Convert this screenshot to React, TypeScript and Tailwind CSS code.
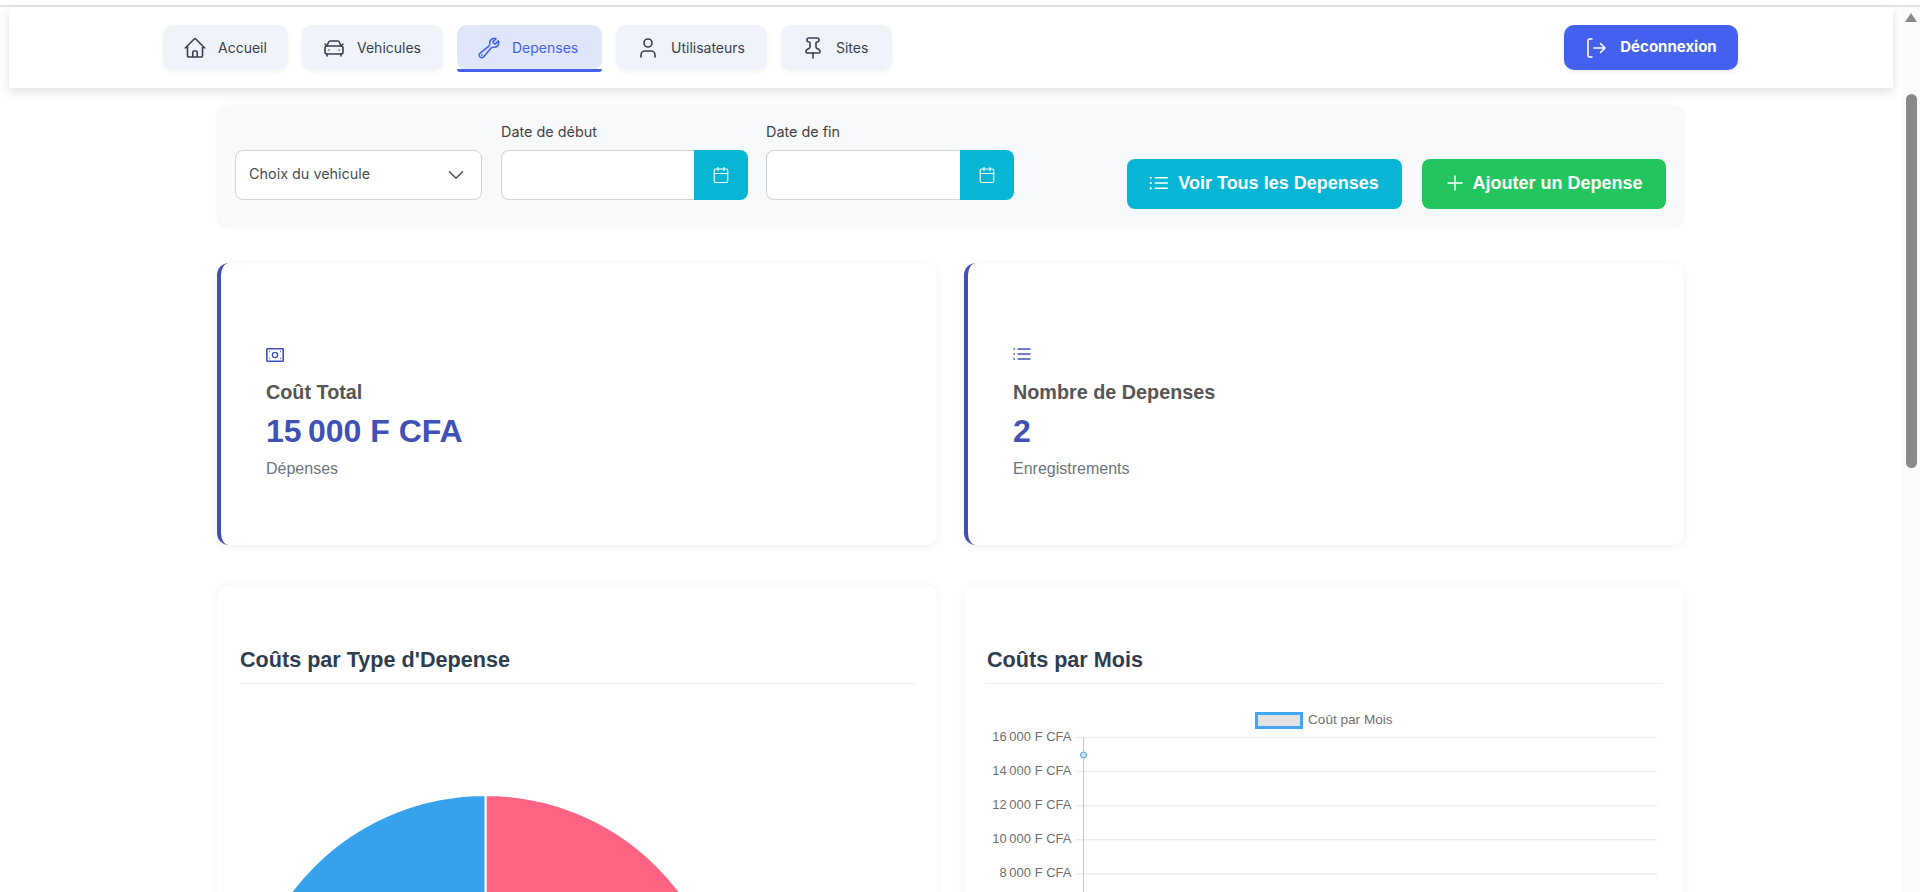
import { Calendar, CarFront, ChevronDown, Pin, Plus, User } from 'lucide-react'
import { HiOutlineHome, HiOutlineListBullet, HiOutlineWrench } from 'react-icons/hi2'
import type { ComponentType, ReactNode } from 'react'

type NavItem = {
  label: string
  icon: ComponentType<{ className?: string; strokeWidth?: number }>
  width: string
  active?: boolean
}

const navItems: NavItem[] = [
  { label: 'Accueil', icon: HiOutlineHome, width: 'w-[125px]' },
  { label: 'Vehicules', icon: CarFront, width: 'w-[141px]' },
  { label: 'Depenses', icon: HiOutlineWrench, width: 'w-[145px]', active: true },
  { label: 'Utilisateurs', icon: User, width: 'w-[151px]' },
  { label: 'Sites', icon: Pin, width: 'w-[111px]' },
]

const yTicks = ['16\u202f000 F CFA', '14\u202f000 F CFA', '12\u202f000 F CFA', '10\u202f000 F CFA', '8\u202f000 F CFA']

function NavBar() {
  return (
    <nav className="ml-[9px] mr-[9px] flex items-center justify-between bg-white pl-[154px] pr-[155px] py-[18px] shadow-[0_4px_10px_rgba(0,0,0,0.12)] font-['Inter',sans-serif]">
      <div className="flex gap-[14px]">
        {navItems.map((item) => {
          const Icon = item.icon
          return (
            <a
              key={item.label}
              className={`relative flex h-[45px] items-center gap-[11px] rounded-[10px] pl-5 text-sm ${item.width} ${
                item.active
                  ? 'bg-[#e1e7fa] text-[#4361ee]'
                  : 'bg-[#f0f3f9] text-[#3a3f50] shadow-[0_2px_5px_rgba(0,0,0,0.05)]'
              }`}
            >
              <Icon className="h-6 w-6" strokeWidth={1.6} />
              {item.label}
              {item.active && <span className="absolute inset-x-0 -bottom-[2px] h-[3px] rounded-b-sm bg-[#4361ee]" />}
            </a>
          )
        })}
      </div>
      <button className="flex h-[45px] w-[174px] items-center justify-center gap-[13px] rounded-[10px] bg-[#4361ee] text-[15px] font-bold text-white shadow-[0_2px_5px_rgba(0,0,0,0.08)]">
        <svg className="h-[22px] w-[22px]" viewBox="0 0 22 22" fill="none" stroke="currentColor" strokeWidth="1.6" strokeLinecap="round" strokeLinejoin="round">
          <path d="M7 2H4.5C3.7 2 3 2.7 3 3.5v15c0 .8.7 1.5 1.5 1.5H7" />
          <path d="M9 11h11M15.5 6.5 20 11l-4.500 4.500" />
        </svg>
        Déconnexion
      </button>
    </nav>
  )
}

function DateField({ label, className }: { label: string; className?: string }) {
  return (
    <div className={className}>
      <label className="block h-[18px] text-[14.4px] leading-[18px] text-[#444]">{label}</label>
      <div className="mt-[9px] flex h-[50px]">
        <div className="flex-1 rounded-l-lg border border-r-0 border-[#ced4da] bg-white" />
        <span className="flex w-[54px] items-center justify-center rounded-r-lg bg-[#06b6d4] text-white">
          <Calendar className="h-[18px] w-[18px]" strokeWidth={1.5} />
        </span>
      </div>
    </div>
  )
}

function Filters() {
  return (
    <section className="mt-[17px] flex h-[122px] items-start rounded-[10px] bg-[#f8f9fa] px-[18px] pt-[18px] shadow-[0_1px_4px_rgba(0,0,0,0.04)] font-['Inter',sans-serif]">
      <div className="mt-[27px] flex h-[50px] w-[247px] items-center justify-between rounded-lg border border-[#ced4da] bg-white pl-[13px] pr-[12px] text-[14.4px] text-[#495057]">
        <span className="pb-[2px]">Choix du vehicule</span>
        <ChevronDown className="h-[26px] w-[26px]" strokeWidth={1.4} />
      </div>
      <DateField label="Date de début" className="ml-[19px] w-[247px]" />
      <DateField label="Date de fin" className="ml-[18px] w-[248px]" />
      <div className="ml-auto mt-[36px] flex gap-5 font-['Liberation_Sans',sans-serif] text-[18px] font-bold text-white">
        <button className="flex h-[50px] w-[275px] items-center justify-center gap-[7px] rounded-lg bg-[#06b6d4] pb-[2px] pr-[3px]">
          <HiOutlineListBullet className="h-6 w-6" />
          Voir Tous les Depenses
        </button>
        <button className="flex h-[50px] w-[244px] items-center justify-center gap-[5px] rounded-lg bg-[#22c55e] pb-[2px] pr-[2px]">
          <Plus className="h-6 w-6" strokeWidth={1.5} />
          Ajouter un Depense
        </button>
      </div>
    </section>
  )
}

function BanknoteIcon() {
  return (
    <svg width="18" height="14" viewBox="0 0 18 14" fill="none" stroke="currentColor">
      <rect x="0.75" y="0.75" width="16.5" height="12.5" rx="1" strokeWidth="1.7" />
      <circle cx="9" cy="7" r="2.6" strokeWidth="1.4" />
      <path d="M3 3.500h.8M14.200 3.500h.8M3 10.500h.8M14.200 10.500h.8" strokeWidth="1.5" />
    </svg>
  )
}

function ListIcon() {
  return (
    <svg width="18" height="12" viewBox="0 0 18 12" fill="none" stroke="currentColor" strokeWidth="1.6">
      <path d="M4.500 1h13M4.500 6h13M4.500 11h13" />
      <path d="M0.500 1h1.500M0.500 6h1.500M0.500 11h1.500" />
    </svg>
  )
}

function StatCard({ icon, title, value, note }: { icon: ReactNode; title: string; value: string; note: string }) {
  return (
    <div className="flex h-[282px] flex-col justify-center rounded-xl border-l-4 border-[#3f51b5] bg-white pl-[45px] pt-[20px] shadow-[0_2px_8px_rgba(0,0,0,0.06)]">
      <div className="h-[22px] text-[#3f51b5]">{icon}</div>
      <h3 className="mt-[8px] text-[19.8px] font-bold leading-[28px] text-[#555]">{title}</h3>
      <p className="mt-[6px] text-[32px] font-bold leading-[38px] text-[#3f51b5]">{value}</p>
      <p className="mt-[7px] text-base leading-6 text-[#6c757d]">{note}</p>
    </div>
  )
}

function PieChart() {
  return (
    <svg className="mt-[109px] block" width="491" height="490" viewBox="0 0 491 490">
      <path d="M245.5 245 V2 A243 243 0 0 1 245.5 488 Z" fill="#ff6384" stroke="#fff" strokeWidth="2" />
      <path d="M245.5 245 V488 A243 243 0 0 1 245.5 2 Z" fill="#36a2eb" stroke="#fff" strokeWidth="2" />
    </svg>
  )
}

function LineChart() {
  return (
    <svg className="block" width="675" height="300" viewBox="0 0 675 300">
      <rect x="269.5" y="29.5" width="45" height="14" fill="#e2e2e2" stroke="#42a5f5" strokeWidth="3" />
      <text x="321" y="40" fontSize="13.6" fill="#707070">Coût par Mois</text>
      {yTicks.map((tick, i) => {
        const y = 53.5 + i * 34.1
        return (
          <g key={tick}>
            <line x1="88" x2="670" y1={y} y2={y} stroke="#ededed" strokeWidth="1.5" />
            <text x="84.5" y={y + 3.5} fontSize="13" fill="#707070" textAnchor="end">{tick}</text>
          </g>
        )
      })}
      <line x1="96.5" x2="96.5" y1="53" y2="300" stroke="#c8c8c8" />
      <circle cx="96.5" cy="71" r="3" fill="#dcdcdc" stroke="#42a5f5" />
    </svg>
  )
}

function ChartCard({ title, children }: { title: string; children: ReactNode }) {
  return (
    <div className="h-[600px] rounded-xl bg-white pl-[23px] pr-[22px] pt-[60px] shadow-[0_0_8px_rgba(0,0,0,0.05)]">
      <h3 className="h-[39px] border-b border-[#eeeeee] text-[21.6px] font-bold leading-[30px] text-[#2c3e50]">{title}</h3>
      {children}
    </div>
  )
}

function Scrollbar() {
  return (
    <aside className="flex w-[18px] flex-col items-center bg-[#fbfbfb] pt-[6px]">
      <span className="h-0 w-0 border-x-[6.5px] border-b-[9px] border-x-transparent border-b-[#8a8a8a]" />
      <span className="mt-[72px] h-[374px] w-[11px] rounded-full bg-[#8a8a8a]" />
    </aside>
  )
}

export default function App() {
  return (
    <div className="flex h-[892px] flex-col overflow-hidden bg-white font-['Liberation_Sans',sans-serif]">
      <div className="mt-[5px] h-[2px] shrink-0 bg-[#e3e3e3]" />
      <div className="flex min-h-0 flex-1">
        <main className="min-w-0 flex-1">
          <NavBar />
          <div className="ml-[217px] w-[1467px]">
            <Filters />
            <div className="mt-9 grid grid-cols-2 gap-[27px]">
              <StatCard icon={<BanknoteIcon />} title="Coût Total" value={'15\u202f000 F CFA'} note="Dépenses" />
              <StatCard icon={<ListIcon />} title="Nombre de Depenses" value="2" note="Enregistrements" />
            </div>
            <div className="mt-10 grid grid-cols-2 gap-[27px]">
              <ChartCard title="Coûts par Type d'Depense">
                <PieChart />
              </ChartCard>
              <ChartCard title="Coûts par Mois">
                <LineChart />
              </ChartCard>
            </div>
          </div>
        </main>
        <Scrollbar />
      </div>
    </div>
  )
}
